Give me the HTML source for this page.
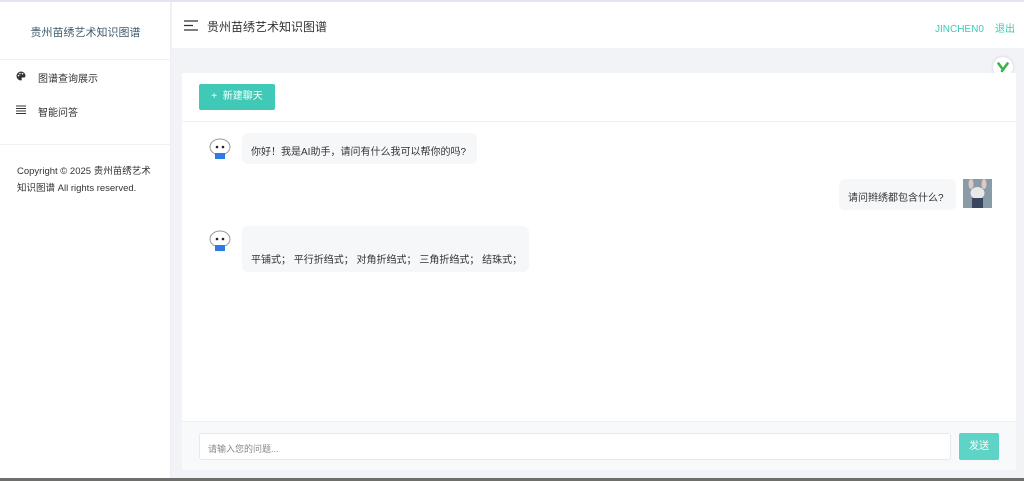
<!DOCTYPE html>
<html><head><meta charset="utf-8"><style>
*{margin:0;padding:0;box-sizing:border-box}
body{width:1024px;height:481px;overflow:hidden;background:#f2f3f7;font-family:"Liberation Sans","Noto Sans CJK SC",sans-serif;position:relative}
.top{position:absolute;left:0;top:0;width:1024px;height:2px;background:#e6e3f5}
.side{position:absolute;left:0;top:2px;width:171px;height:479px;background:#fff;border-right:1px solid #eceef2}
.side .t{position:absolute;top:22px;width:171px;text-align:center;color:#3e5a6e;font-size:11px}
.side .l1{position:absolute;top:57px;left:0;width:171px;border-top:1px solid #f0f1f3}
.side .l2{position:absolute;top:142px;left:0;width:171px;border-top:1px solid #f0f1f3}
.side .m{position:absolute;left:38px;font-size:10px;color:#333}
.side .c{position:absolute;left:17px;top:161px;width:140px;font-size:9.5px;line-height:17px;color:#333}
.hdr{position:absolute;left:172px;top:2px;width:852px;height:46px;background:#fff}
.hdr .t{position:absolute;left:35px;top:16px;font-size:12px;color:#333}
.hdr .u{position:absolute;right:9px;top:18px;font-size:10px;color:#3cc9b4}
.card{position:absolute;left:182px;top:73px;width:834px;height:397px;background:#fff}
.btn{position:absolute;left:17px;top:11px;width:76px;height:26px;background:#40c9b6;color:#fff;font-size:10px;line-height:26px;text-align:center;border-radius:2px}
.dv{position:absolute;left:0;top:48px;width:834px;border-top:1px solid #f0f1f3}
.bub{position:absolute;background:#f6f7f9;border-radius:6px;font-size:10px;color:#333;white-space:nowrap}
.foot{position:absolute;left:0;top:348px;width:834px;height:49px;background:#f8f9fb;border-top:1px solid #eef0f2}
.inp{position:absolute;left:17px;top:11px;width:752px;height:27px;background:#fff;border:1px solid #e6e8eb;border-radius:3px;font-size:9px;color:#888;padding:8px 8px}
.send{position:absolute;left:777px;top:11px;width:40px;height:27px;background:#5dd4c5;color:#fff;font-size:10px;line-height:27px;text-align:center;border-radius:2px}
.av{position:absolute;width:26px;height:26px}
</style></head><body>
<div class="top"></div>
<div class="side">
<div class="t">贵州苗绣艺术知识图谱</div>
<div class="l1"></div>
<svg style="position:absolute;left:16px;top:69px" width="10" height="10" viewBox="0 0 10 10"><path d="M5 0.5a4.5 4.5 0 1 0 0 9c1 0 1-1 .6-1.6-.4-.6 0-1.4.8-1.4H8a1.6 1.6 0 0 0 1.5-1.6A4.5 4.5 0 0 0 5 .5z" fill="#333"/><circle cx="2.6" cy="4.6" r=".8" fill="#fff"/><circle cx="4" cy="2.5" r=".8" fill="#fff"/><circle cx="6.5" cy="2.7" r=".8" fill="#fff"/></svg>
<div class="m" style="top:68px">图谱查询展示</div>
<svg style="position:absolute;left:16px;top:103px" width="10" height="10" viewBox="0 0 10 10" stroke="#333" stroke-width="1"><path d="M0 1h10M0 3.5h10M0 6h10M0 8.5h10"/></svg>
<div class="m" style="top:102px">智能问答</div>
<div class="l2"></div>
<div class="c">Copyright © 2025 贵州苗绣艺术知识图谱 All rights reserved.</div>
</div>
<div class="hdr">
<svg style="position:absolute;left:12px;top:18px" width="14" height="11" viewBox="0 0 14 11" stroke="#333" stroke-width="1.3"><path d="M0 1h14M0 5.5h9M0 10h14"/></svg>
<div class="t">贵州苗绣艺术知识图谱</div>
<div class="u">JINCHEN0&nbsp;&nbsp;&nbsp;&nbsp;退出</div>
</div>
<div style="position:absolute;left:993px;top:57px;width:20px;height:20px;border-radius:50%;background:#fff;box-shadow:0 0 3px rgba(0,0,0,.15)"><svg width="20" height="20" viewBox="0 0 20 20"><path d="M5.5 6.5l4 5.5M14.5 6.5l-5.5 7.5" stroke="#3bb54a" stroke-width="2.6" fill="none" stroke-linecap="round"/></svg></div>
<div class="card">
<div class="btn">+&nbsp; 新建聊天</div>
<div class="dv"></div>
<svg class="av" style="left:25px;top:63px" viewBox="0 0 26 26"><ellipse cx="13" cy="11" rx="10" ry="8" fill="#fff" stroke="#999"/><circle cx="10" cy="11" r="1.3" fill="#222"/><circle cx="16" cy="11" r="1.3" fill="#222"/><rect x="8" y="17" width="10" height="6" fill="#2b7de0"/></svg>
<div class="bub" style="left:60px;top:60px;width:235px;height:31px;padding:10px 9px">你好！我是AI助手，请问有什么我可以帮你的吗?</div>
<div class="bub" style="left:657px;top:106px;width:117px;height:31px;padding:10px 9px">请问辫绣都包含什么?</div>
<svg class="av" style="left:781px;top:106px;width:29px;height:29px" viewBox="0 0 29 29"><rect width="29" height="29" fill="#8a9ba8"/><ellipse cx="14.5" cy="14" rx="7" ry="6" fill="#e8e8ea"/><ellipse cx="8" cy="5" rx="2.5" ry="5" fill="#e0c8c8"/><ellipse cx="21" cy="5" rx="2.5" ry="5" fill="#e0c8c8"/><rect x="9" y="19" width="11" height="10" fill="#3a4660"/></svg>
<svg class="av" style="left:25px;top:155px" viewBox="0 0 26 26"><ellipse cx="13" cy="11" rx="10" ry="8" fill="#fff" stroke="#999"/><circle cx="10" cy="11" r="1.3" fill="#222"/><circle cx="16" cy="11" r="1.3" fill="#222"/><rect x="8" y="17" width="10" height="6" fill="#2b7de0"/></svg>
<div class="bub" style="left:60px;top:153px;width:287px;height:46px;padding:25px 9px 0">平铺式；&nbsp;平行折绉式；&nbsp;对角折绉式；&nbsp;三角折绉式；&nbsp;结珠式；</div>
<div class="foot"><div class="inp">请输入您的问题...</div><div class="send">发送</div></div>
</div>
<div style="position:absolute;left:0;top:478px;width:1024px;height:3px;background:#6e6e6a"></div>
</body></html>
